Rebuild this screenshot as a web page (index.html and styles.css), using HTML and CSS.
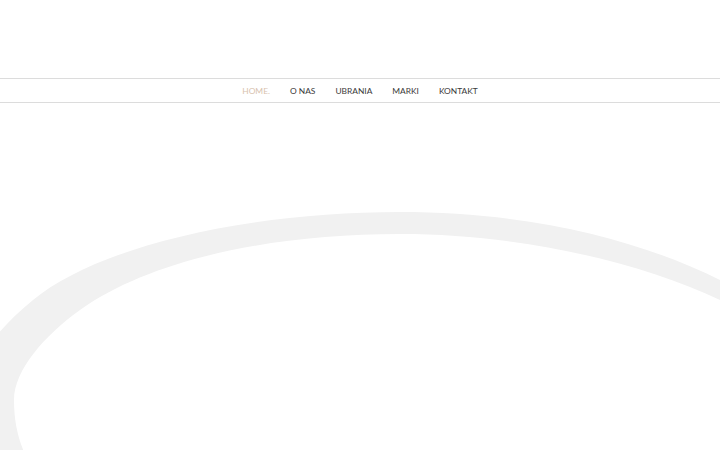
FILE: index.html
```html
<!DOCTYPE html>
<html lang="pl">
<head>
<meta charset="utf-8">
<title>Home</title>
<link rel="stylesheet" href="styles.css">
</head>
<body>
<header class="top"></header>
<nav class="menu">
  <ul class="menu-list">
    <li><a class="menu-link active" href="#">HOME.</a></li>
    <li><a class="menu-link" href="#">O NAS</a></li>
    <li><a class="menu-link" href="#">UBRANIA</a></li>
    <li><a class="menu-link" href="#">MARKI</a></li>
    <li><a class="menu-link" href="#">KONTAKT</a></li>
  </ul>
</nav>
<section class="hero">
  <svg class="ring" viewBox="0 103 720 347" preserveAspectRatio="none" xmlns="http://www.w3.org/2000/svg">
    <path fill="#f1f1f1" d="M -40 400 C -30 370, -10 335, 33 300 C 100 245, 250 212, 400 212 C 530 212, 640 240, 720 280 C 760 300, 785 315, 800 330 L 800 500 L -40 500 Z"/>
    <path fill="#ffffff" d="M 40 480 C 22 455, 14 430, 14 400 C 14 370, 45 335, 80 310 C 150 260, 270 234, 400 234 C 520 234, 640 262, 720 300 C 760 319, 790 340, 800 355 L 800 500 L 40 500 Z"/>
  </svg>
</section>
</body>
</html>
```

FILE: styles.css
```css
* { box-sizing: border-box; }
html, body { margin: 0; padding: 0; background: #fff; }
body { width: 720px; height: 450px; overflow: hidden; font-family: Lato, "Open Sans", sans-serif; }
.top { height: 78px; }
.menu {
  height: 25px;
  border-top: 1px solid #dcdcdc;
  border-bottom: 1px solid #dcdcdc;
  display: flex;
  justify-content: center;
  align-items: center;
}
.menu-list {
  list-style: none;
  margin: 0;
  padding: 0;
  display: flex;
  gap: 0;
}
.menu-link {
  display: block;
  padding: 1px 10px 0;
  font-size: 8.4px;
  line-height: 22px;
  color: #3a3a3a;
  text-decoration: none;
}
.menu-link.active { color: #d8c2ae; }
.hero { height: 347px; }
.ring { display: block; width: 720px; height: 347px; }
```
